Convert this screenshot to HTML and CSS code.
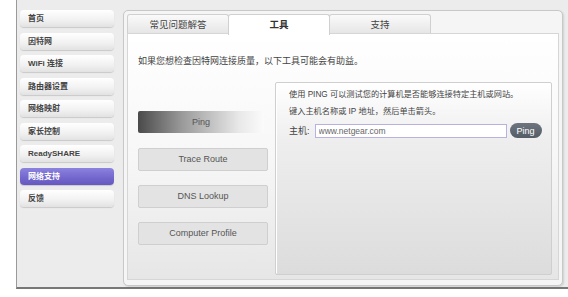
FILE: index.html
```html
<!DOCTYPE html>
<html>
<head>
    <title>网络支持 - 工具</title>
    <meta charset="UTF-8">
    <link rel="stylesheet" href="styles.css">
</head>
<body>
    <div class="frame">
        <div class="sidebar">
            <div class="nav-btn">首页</div>
            <div class="nav-btn">因特网</div>
            <div class="nav-btn">WiFi 连接</div>
            <div class="nav-btn">路由器设置</div>
            <div class="nav-btn">网络映射</div>
            <div class="nav-btn">家长控制</div>
            <div class="nav-btn">ReadySHARE</div>
            <div class="nav-btn active">网络支持</div>
            <div class="nav-btn">反馈</div>
        </div>

        <div class="panel">
            <div class="tabs">
                <div class="tab">常见问题解答</div>
                <div class="tab active">工具</div>
                <div class="tab">支持</div>
            </div>
            <div class="content">
                <p class="intro">如果您想检查因特网连接质量，以下工具可能会有助益。</p>
                <div class="tools">
                    <div class="tool-list">
                        <div class="tool-btn selected">Ping</div>
                        <div class="tool-btn">Trace Route</div>
                        <div class="tool-btn">DNS Lookup</div>
                        <div class="tool-btn">Computer Profile</div>
                    </div>
                    <div class="tool-box">
                        <p>使用 PING 可以测试您的计算机是否能够连接特定主机或网站。</p>
                        <p>键入主机名称或 IP 地址，然后单击箭头。</p>
                        <div class="host-row">
                            <label>主机:</label>
                            <input type="text" value="www.netgear.com">
                            <button class="ping-btn">Ping</button>
                        </div>
                    </div>
                </div>
            </div>
        </div>
    </div>
</body>
</html>
```

FILE: styles.css
```css
body {
    font-family: "Liberation Sans", "Noto Sans CJK SC", sans-serif;
    margin: 0;
    background: #fff;
    color: #333;
}

.frame {
    margin-left: 16px;
    width: 551px;
    height: 287px;
    border-left: 1px solid #9a9a9a;
    border-bottom: 2px solid #777;
    background: #ececec;
    display: flex;
}

.sidebar {
    width: 103px;
    padding: 10px 0 0 3px;
    display: flex;
    flex-direction: column;
    gap: 5.5px;
}

.nav-btn {
    width: 86px;
    height: 17px;
    line-height: 17px;
    padding-left: 8px;
    font-size: 8px;
    font-weight: bold;
    color: #444;
    background: linear-gradient(#ffffff, #f1f1f1 60%, #e2e2e2);
    border-radius: 4px;
    box-shadow: 0 1px 1px rgba(0,0,0,0.15);
}

.nav-btn.active {
    color: #fff;
    background: linear-gradient(#8c82de, #7266cc 60%, #6558c0);
}

.panel {
    margin-top: 10px;
    width: 432px;
    height: 266px;
    padding: 3px 3px 5px 3px;
    border: 1px solid #c8c8c8;
    border-radius: 5px;
    background: #f5f5f5;
    box-shadow: 1px 1px 2px rgba(0,0,0,0.12);
    display: flex;
    flex-direction: column;
}

.tabs {
    display: flex;
    height: 19px;
}

.tab {
    width: 100px;
    text-align: center;
    font-size: 9.5px;
    line-height: 19px;
    color: #444;
    background: linear-gradient(#fafafa, #e6e6e6);
    border: 1px solid #d0d0d0;
    border-bottom: none;
    border-radius: 3px 3px 0 0;
    margin-right: -1px;
}

.tab.active {
    background: #fff;
    font-weight: bold;
    color: #333;
    position: relative;
    z-index: 1;
    height: 20px;
}

.content {
    flex: 1;
    border: 1px solid #d6d6d6;
    background: linear-gradient(#ffffff, #f7f7f7 50%, #e6e6e6);
    padding: 0 6px 4px 10px;
    display: flex;
    flex-direction: column;
}

.intro {
    margin: 20px 0 0 0;
    font-size: 9px;
    color: #444;
    height: 28px;
}

.tools {
    flex: 1;
    display: flex;
    justify-content: space-between;
}

.tool-list {
    padding-top: 29px;
    display: flex;
    flex-direction: column;
    gap: 14px;
}

.tool-btn {
    width: 128px;
    height: 21px;
    line-height: 21px;
    text-align: center;
    font-size: 9px;
    color: #555;
    background: #e3e3e3;
    border: 1px solid #cfcfcf;
    border-radius: 2px;
}

.tool-btn.selected {
    width: 126px;
    height: 22px;
    line-height: 22px;
    border: none;
    background: linear-gradient(to right, #4a4a4a, #9a9a9a 35%, #e8e8e8 80%, #fbfbfb);
    color: #555;
    margin-bottom: 1px;
}

.tool-box {
    width: 262px;
    padding: 6px 0 0 13px;
    border: 1px solid #cfcfcf;
    border-radius: 2px;
    background: linear-gradient(#ffffff, #eeeeee 30%, #dcdcdc);
    box-shadow: inset 1px 1px 0 #fff;
}

.tool-box p {
    margin: 0 0 5px 0;
    font-size: 8.2px;
    line-height: 12px;
    color: #444;
}

.host-row {
    display: flex;
    align-items: center;
    margin-top: 4px;
    font-size: 9px;
    color: #444;
}

.host-row label {
    margin-right: 5px;
}

.host-row input {
    width: 184px;
    height: 12px;
    padding: 0 3px;
    border: 1px solid #b9b2e0;
    font-family: inherit;
    font-size: 8.5px;
    color: #666;
    background: #fff;
    outline: none;
}

.ping-btn {
    margin-left: 3px;
    height: 15px;
    width: 32px;
    padding: 0;
    border: none;
    border-radius: 8px;
    background: linear-gradient(#6d7680, #545c66);
    color: #fff;
    font-family: inherit;
    font-size: 9px;
}
```
